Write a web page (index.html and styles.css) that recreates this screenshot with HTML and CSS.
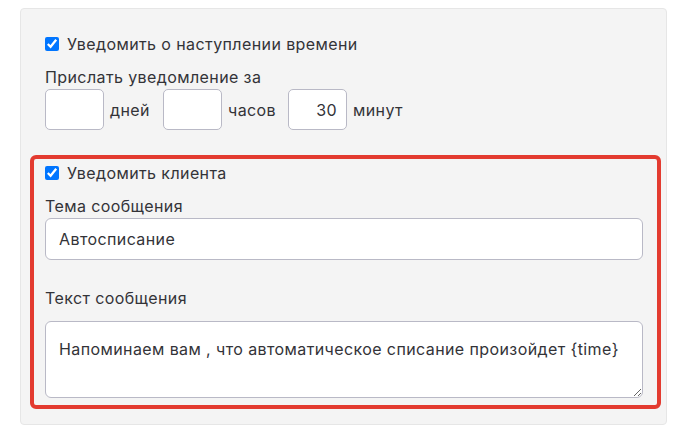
FILE: index.html
```html
<!DOCTYPE html>
<html lang="ru">
<head>
    <meta charset="UTF-8">
    <meta name="viewport" content="width=device-width, initial-scale=1.0">
    <title>Уведомления</title>
    <link rel="stylesheet" href="styles.css">
</head>
<body>
    <div class="panel">
        <label class="check-row">
            <input type="checkbox" checked>
            <span>Уведомить о наступлении времени</span>
        </label>
        <p class="label first">Прислать уведомление за</p>
        <div class="time-row">
            <input class="num" type="text" value="">
            <span class="unit">дней</span>
            <input class="num" type="text" value="">
            <span class="unit">часов</span>
            <input class="num" type="text" value="30">
            <span class="unit">минут</span>
        </div>

        <div class="client-box">
            <label class="check-row">
                <input type="checkbox" checked>
                <span>Уведомить клиента</span>
            </label>
            <p class="label">Тема сообщения</p>
            <input class="field" type="text" value="Автосписание">
            <p class="label text-label">Текст сообщения</p>
            <textarea class="field area">Напоминаем вам , что автоматическое списание произойдет {time}</textarea>
        </div>
    </div>
</body>
</html>
```

FILE: styles.css
```css
body { margin: 0; padding: 8px 26px 0 20px; background: #fff; font-family: Inter, "Noto Sans", sans-serif; font-size: 16px; letter-spacing: 0.4px; color: #333338; }
.panel { background: #f4f4f4; border: 1px solid #e6e6e6; border-radius: 4px; padding: 23px 24px 15px 24px; height: 377px; }
.check-row { display: flex; align-items: center; height: 24px; gap: 8px; }
.check-row input { width: 14px; height: 14px; margin: 0; }
.label { margin: 9px 0 0 0; line-height: 24px; }
.time-row { display: flex; align-items: center; }
.num { width: 59px; height: 41px; box-sizing: border-box; border: 1px solid #b9b9c6; border-radius: 5px; background: #fff; font: inherit; letter-spacing: inherit; color: inherit; text-align: right; padding: 0 9px; }
.unit { margin: 0 0 0 6px; width: 53px; }
.time-row .unit:nth-of-type(2) { width: 60px; }
.client-box { margin: 25px -19px 0 -15px; border: 4px solid #e33b30; border-radius: 6px; padding: 2px 14px 7px 11px; }
.client-box .label { margin-top: 9px; }
.field { display: block; width: 100%; box-sizing: border-box; height: 42px; border: 1px solid #b9b9c6; border-radius: 6px; background: #fff; font: inherit; letter-spacing: inherit; color: inherit; padding: 0 13px; }
.text-label { margin-top: 26px !important; margin-bottom: 11px; }
.area { height: 77px; padding: 15px 13px; resize: vertical; line-height: 24px; }
```
